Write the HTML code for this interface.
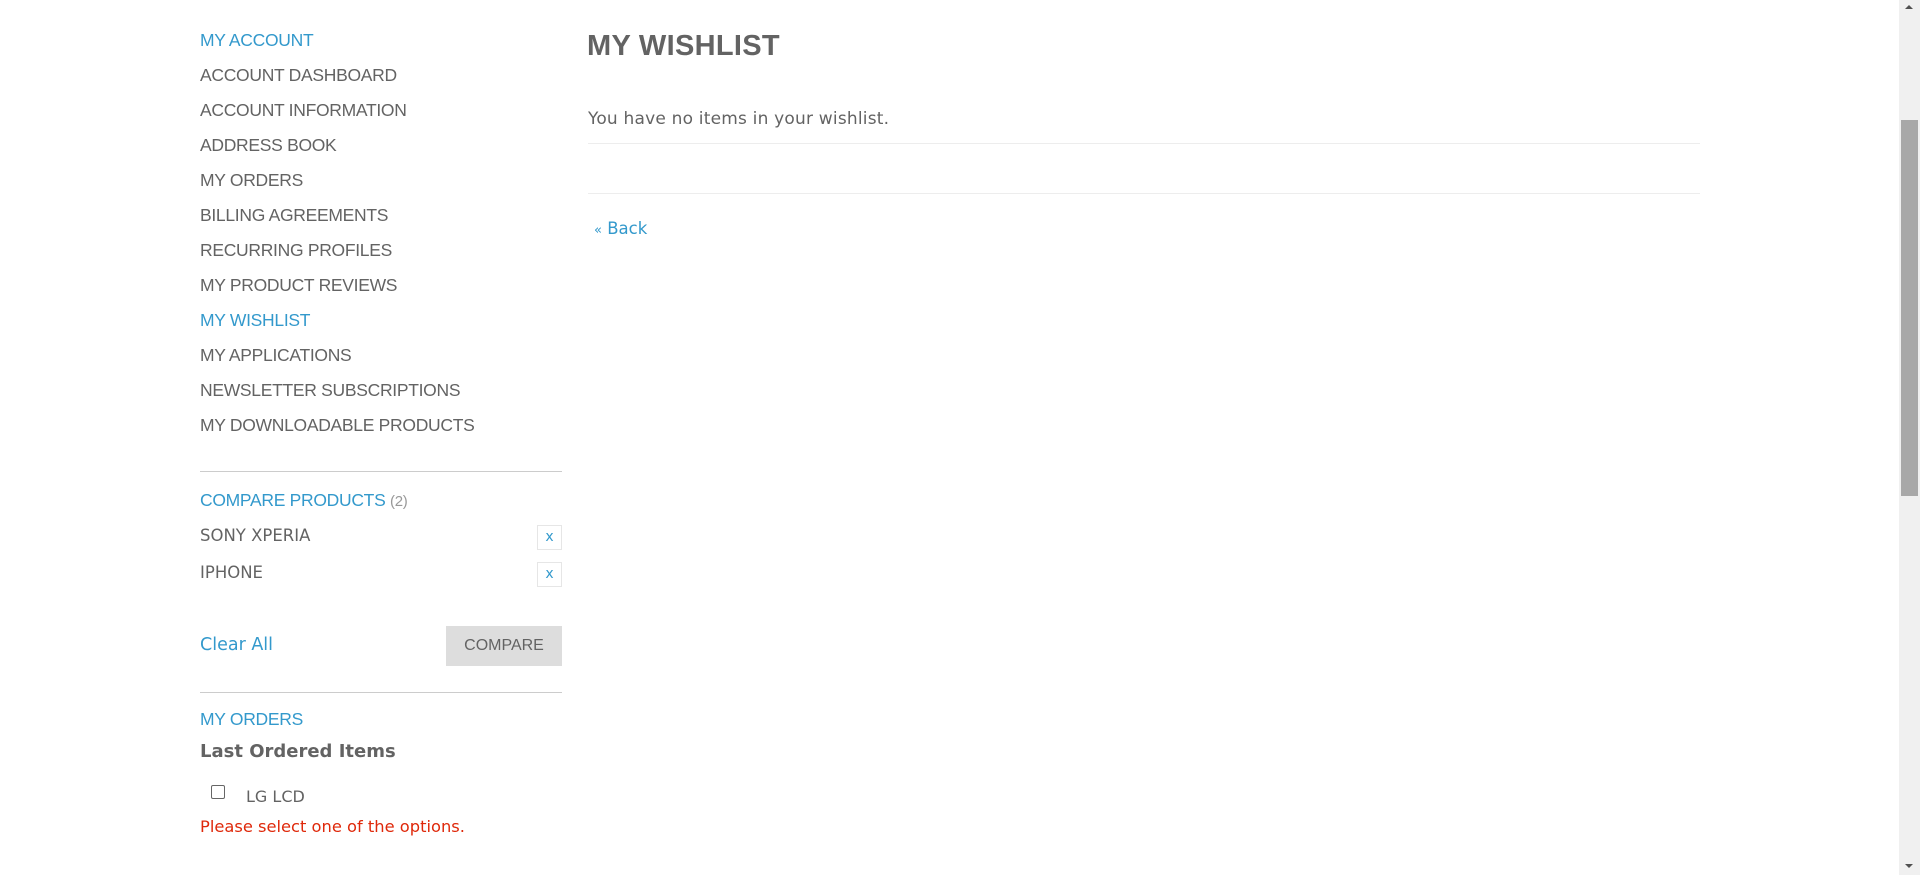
<!DOCTYPE html>
<html><head><meta charset="utf-8"><style>
html,body{margin:0;padding:0;background:#fff;width:1920px;height:875px;overflow:hidden;position:relative;font-family:"Liberation Sans",sans-serif}
.a{position:absolute;white-space:nowrap;line-height:1}
.nav{left:200px;font-size:17.5px;color:#636363;letter-spacing:-0.3px}
.blue{color:#3399cc}
.v{font-family:"DejaVu Sans",sans-serif}
.hr{position:absolute;height:1px;background:#ddd}
.sb{position:absolute;left:1899px;top:0;width:21px;height:875px;background:#f0f0f0}
</style></head><body>
<div class="a nav blue" style="top:32px">MY ACCOUNT</div>
<div class="a nav" style="top:67px">ACCOUNT DASHBOARD</div>
<div class="a nav" style="top:102px">ACCOUNT INFORMATION</div>
<div class="a nav" style="top:137px">ADDRESS BOOK</div>
<div class="a nav" style="top:172px">MY ORDERS</div>
<div class="a nav" style="top:207px">BILLING AGREEMENTS</div>
<div class="a nav" style="top:242px">RECURRING PROFILES</div>
<div class="a nav" style="top:277px">MY PRODUCT REVIEWS</div>
<div class="a nav blue" style="top:312px">MY WISHLIST</div>
<div class="a nav" style="top:347px">MY APPLICATIONS</div>
<div class="a nav" style="top:382px">NEWSLETTER SUBSCRIPTIONS</div>
<div class="a nav" style="top:417px">MY DOWNLOADABLE PRODUCTS</div>
<div class="hr" style="left:200px;width:362px;top:471px;background:#ccc"></div>
<div class="a nav blue" style="top:492px">COMPARE PRODUCTS <span style="color:#999;font-size:15px">(2)</span></div>
<div class="a v" style="left:200px;top:528px;font-size:16.5px;color:#636363">SONY XPERIA</div>
<div class="a v blue" style="left:537px;top:525px;width:23px;height:23px;border:1px solid #e6e6e6;font-size:14px;text-align:center;line-height:23px">x</div>
<div class="a v" style="left:200px;top:565px;font-size:16.5px;color:#636363">IPHONE</div>
<div class="a v blue" style="left:537px;top:562px;width:23px;height:23px;border:1px solid #e6e6e6;font-size:14px;text-align:center;line-height:23px">x</div>
<div class="a v blue" style="left:200px;top:637px;font-size:17.5px">Clear All</div>
<div class="a" style="left:446px;top:626px;width:116px;height:40px;background:#ddd;color:#636363;font-size:16px;text-align:center;line-height:40px">COMPARE</div>
<div class="hr" style="left:200px;width:362px;top:692px;background:#ccc"></div>
<div class="a nav blue" style="top:711px">MY ORDERS</div>
<div class="a v" style="left:200px;top:743px;font-size:18px;font-weight:bold;color:#636363">Last Ordered Items</div>
<div class="a" style="left:211px;top:785px;width:12px;height:12px;border:1px solid #666;border-radius:2px"></div>
<div class="a v" style="left:246px;top:789px;font-size:16px;color:#636363">LG LCD</div>
<div class="a v" style="left:200px;top:819px;font-size:16.3px;color:#df280a">Please select one of the options.</div>

<div class="a" style="left:587px;top:32px;font-size:29px;font-weight:bold;color:#636363;letter-spacing:0.3px">MY WISHLIST</div>
<div class="a v" style="left:588px;top:111px;font-size:17px;color:#636363;letter-spacing:0.2px">You have no items in your wishlist.</div>
<div class="hr" style="left:588px;width:1112px;top:143px;background:#ededed"></div>
<div class="hr" style="left:588px;width:1112px;top:193px;background:#ededed"></div>
<div class="a v blue" style="left:594px;top:221px;font-size:16.5px"><span style="font-size:13px">«</span> Back</div>

<div class="sb"><div style="position:absolute;left:2px;top:120px;width:17px;height:376px;background:#a8a8a8"></div>
<div style="position:absolute;left:6px;top:5px;width:0;height:0;border-left:4px solid transparent;border-right:4px solid transparent;border-bottom:4px solid #505050"></div>
<div style="position:absolute;left:6px;top:864px;width:0;height:0;border-left:4px solid transparent;border-right:4px solid transparent;border-top:4px solid #505050"></div></div>
</body></html>
